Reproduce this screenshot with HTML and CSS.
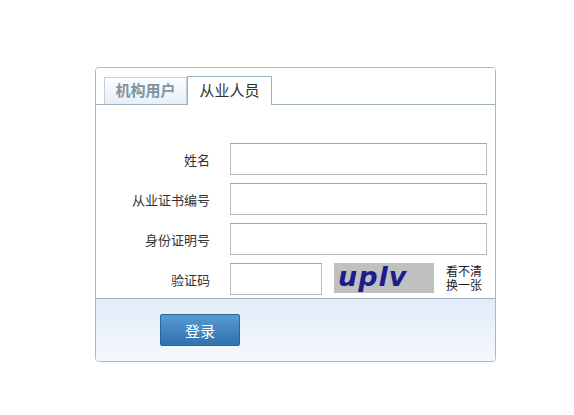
FILE: index.html
```html
<!DOCTYPE html>
<html lang="zh-CN">
<head>
    <meta charset="UTF-8">
    <title>登录</title>
    <link rel="stylesheet" href="styles.css">
</head>
<body>
    <div class="login-box">
        <div class="tabs">
            <span class="tab">机构用户</span>
            <span class="tab active">从业人员</span>
        </div>

        <div class="form">
            <div class="row">
                <label>姓名</label>
                <input type="text" class="field">
            </div>
            <div class="row">
                <label>从业证书编号</label>
                <input type="text" class="field">
            </div>
            <div class="row">
                <label>身份证明号</label>
                <input type="text" class="field">
            </div>
            <div class="row">
                <label>验证码</label>
                <input type="text" class="field code">
                <div class="captcha">uplv</div>
                <a class="refresh">看不清<br>换一张</a>
            </div>
        </div>

        <div class="footer">
            <button class="login-btn">登录</button>
        </div>
    </div>
</body>
</html>
```

FILE: styles.css
```css
* {
    margin: 0;
    padding: 0;
    box-sizing: border-box;
}

body {
    background: #fff;
    font-family: "Liberation Sans", "Noto Sans CJK SC", sans-serif;
    color: #333;
}

.login-box {
    width: 401px;
    height: 295px;
    margin: 67px 0 0 95px;
    border: 1px solid #a9bac6;
    border-radius: 4px;
    display: flex;
    flex-direction: column;
    overflow: hidden;
}

.tabs {
    display: flex;
    align-items: flex-end;
    height: 37px;
    padding-left: 8px;
    border-bottom: 1px solid #9fb0bd;
    background: #fff;
}

.tab {
    width: 83px;
    height: 27px;
    line-height: 26px;
    text-align: center;
    font-size: 15px;
    font-weight: bold;
    color: #8193a0;
    border: 1px solid #c3d0da;
    border-bottom: none;
    background: linear-gradient(#fbfdff, #e6eff7);
}

.tab.active {
    width: 85px;
    height: 29px;
    line-height: 28px;
    margin-bottom: -1px;
    color: #333;
    font-weight: normal;
    border-color: #9fb0bd;
    background: #fff;
}

.form {
    flex: 1;
    padding-top: 38px;
    display: flex;
    flex-direction: column;
    gap: 8px;
}

.row {
    display: flex;
    align-items: center;
    height: 32px;
}

.row label {
    width: 114px;
    text-align: right;
    font-size: 13px;
    margin-right: 20px;
}

.field {
    width: 257px;
    height: 32px;
    border: 1px solid #b9b9b9;
    border-top-color: #a6a6a6;
    background: #fff;
}

.field.code {
    width: 92px;
}

.captcha {
    width: 100px;
    height: 30px;
    margin-left: 12px;
    margin-top: -2px;
    background: #c0c0c0;
    color: #1c1c8e;
    font-family: "DejaVu Sans", sans-serif;
    font-style: italic;
    font-weight: bold;
    font-size: 27px;
    line-height: 28px;
    padding-left: 4px;
    letter-spacing: 1px;
}

.refresh {
    margin-left: 12px;
    font-size: 12px;
    line-height: 14px;
    color: #222;
}

.footer {
    height: 63px;
    border-top: 1px solid #9fb0bd;
    background: linear-gradient(#e2edf9, #f4f8fc);
    padding: 15px 0 0 64px;
}

.login-btn {
    width: 80px;
    height: 32px;
    border: 1px solid #2d6396;
    border-radius: 2px;
    background: linear-gradient(#5a9ad2, #2f72ae);
    color: #fff;
    font-size: 15px;
    font-family: "Noto Sans CJK SC", sans-serif;
}
```
